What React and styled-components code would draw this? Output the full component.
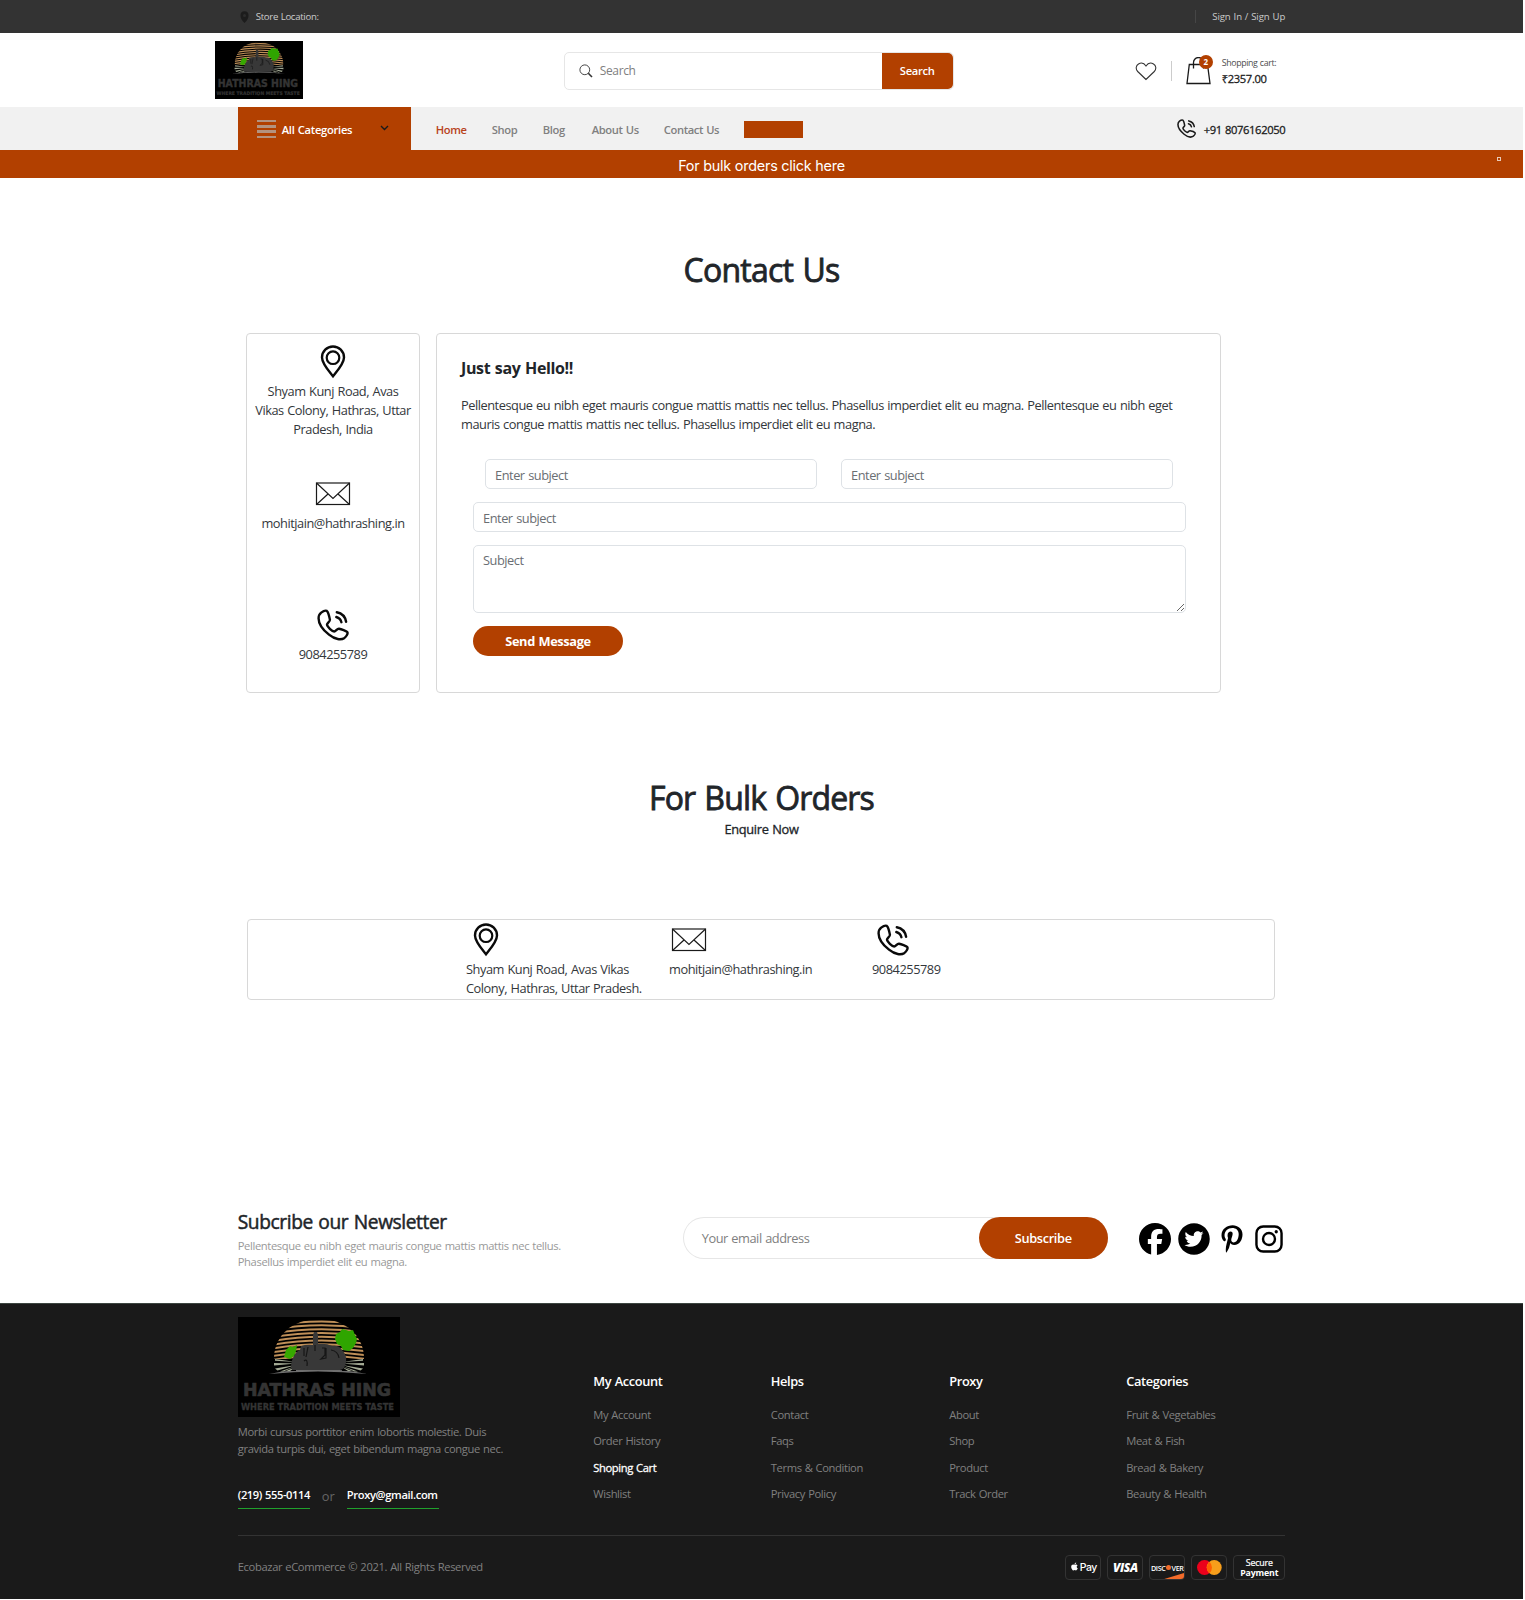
import React from "react";
import styled, { createGlobalStyle, css } from "styled-components";
import { AiFillTwitterCircle } from "react-icons/ai";
import { FaPinterestP, FaApple } from "react-icons/fa";
import { FaFacebook } from "react-icons/fa6";

const brand = "#b24000";

const GlobalStyle = createGlobalStyle`
  * { box-sizing: border-box; }
  body { margin: 0; background: #fff; color: #212529; font-family: "Open Sans", "Noto Sans", sans-serif; font-size: 12.8px; }
  p, h1, h2, h3, ul { margin: 0; padding: 0; }
  input, textarea, button { font-family: inherit; }
`;

const spacing = css`
  letter-spacing: ${(p) => p.$ls ?? -0.37}px;
  word-spacing: 0.05em;
`;

/* Open Sans ships no medium cut here, so a hairline stroke thickens the regular one. */
const medium = css`
  font-weight: 400;
  -webkit-text-stroke: 0.025em currentColor;
`;

const Page = styled.div`
  width: 1523px;
  height: 1599px;
  display: flex;
  flex-direction: column;
  overflow: hidden;
`;

const Container = styled.div`
  width: 1047.5px;
  margin: 0 auto;
  display: flex;
  align-items: center;
  height: 100%;
`;

/* ---------- top bar ---------- */
const TopBar = styled.div`
  height: 33px;
  background: #333;
  color: #ccc;
  font-size: 9.6px;
  line-height: 33px;
  flex: none;
`;
const StoreLocation = styled.span`
  display: flex;
  align-items: center;
  gap: 7px;
  padding-left: 2px;
  ${spacing}
`;
const AuthLinks = styled.a`
  display: flex;
  align-items: center;
  margin-left: auto;
  ${spacing}
  &::before {
    content: "";
    width: 1px;
    height: 13px;
    background: #464646;
    margin-right: 16px;
  }
`;

/* ---------- header ---------- */
const Header = styled.header`
  height: 74px;
  flex: none;
`;
const HeaderRow = styled(Container)`
  padding-top: 2px;
`;
const HeaderLogo = styled.div`
  margin: -2px 0 0 -23px;
  width: 88px;
  height: 58px;
  display: flex;
`;
const SearchBox = styled.div`
  display: flex;
  align-items: center;
  margin-left: 261px;
  margin-top: -1px;
  width: 390px;
  height: 38px;
  border: 1px solid #e6e6e6;
  border-radius: 5px;
  padding-left: 14px;
`;
const SearchHint = styled.span`
  flex: 1;
  margin-left: 7px;
  font-size: 12px;
  color: #808080;
  ${spacing}
`;
const SearchButton = styled.button`
  width: 71px;
  height: 36px;
  border: 0;
  padding: 0;
  background: ${brand};
  border-radius: 0 5px 5px 0;
  color: #fff;
  font-size: 11.2px;
  font-weight: 600;
  ${spacing}
`;
const HeaderTools = styled.div`
  display: flex;
  align-items: center;
  margin-left: 181px;
`;
const Separator = styled.span`
  width: 1px;
  height: 20px;
  background: #ccc;
  margin: 0 14px;
`;
const BagWrap = styled.div`
  position: relative;
  width: 25px;
  height: 28px;
  margin-right: 11px;
`;
const Badge = styled.span`
  position: absolute;
  top: -2px;
  right: -2px;
  width: 14px;
  height: 14px;
  border-radius: 50%;
  background: ${brand};
  color: #fff;
  font-size: 8px;
  font-weight: 700;
  line-height: 14px;
  text-align: center;
`;
const CartLabel = styled.div`
  font-size: 8.8px;
  line-height: 15px;
  color: #4d4d4d;
  ${spacing}
`;
const CartTotal = styled.div`
  font-size: 11.2px;
  line-height: 16px;
  color: #1a1a1a;
  ${medium}
  ${spacing}
`;

/* ---------- navigation ---------- */
const Nav = styled.nav`
  height: 43px;
  background: #f1f1f1;
  flex: none;
`;
const CategoryButton = styled.div`
  width: 173px;
  height: 43px;
  background: ${brand};
  color: #fff;
  font-size: 11.2px;
  font-weight: 600;
  display: flex;
  align-items: center;
  padding: 2px 22px 0 19px;
  ${spacing}
`;
const CategoryBars = styled.span`
  width: 19px;
  height: 18px;
  margin: -2px 6px 0 0;
  background: repeating-linear-gradient(#b4937f 0 2.4px, transparent 2.4px 5.2px);
`;
const Chevron = styled.svg`
  margin: -3px 0 0 auto;
`;
const NavLinks = styled.div`
  display: flex;
  gap: 25px;
  margin-left: 25px;
  padding-top: 2px;
  align-items: center;
`;
const NavLink = styled.a`
  width: ${(p) => p.$w}px;
  white-space: nowrap;
  font-size: 11.2px;
  font-weight: 600;
  color: ${(p) => (p.$active ? "#b8431c" : "#808080")};
  ${spacing}
`;
const NavBlock = styled.span`
  width: 59px;
  height: 17px;
  margin-top: -1px;
  background: ${brand};
`;
const NavPhone = styled.div`
  display: flex;
  align-items: center;
  gap: 8px;
  margin-left: auto;
  font-size: 11.2px;
  color: #1a1a1a;
  span { padding-top: 2px; }
  ${medium}
  ${spacing}
`;

const Banner = styled.div`
  position: relative;
  height: 28px;
  flex: none;
  background: ${brand};
  color: #fff;
  font-family: Inter, sans-serif;
  font-size: 14.4px;
  line-height: 31px;
  text-align: center;
  letter-spacing: -0.23px;
`;
const BannerClose = styled.span`
  position: absolute;
  right: 22px;
  top: 7px;
  width: 4px;
  height: 4px;
  border: 1px solid #e8c9b8;
`;

/* ---------- contact ---------- */
const PageTitle = styled.h1`
  font-size: 32px;
  line-height: 38px;
  text-align: center;
  margin-top: ${(p) => p.$top}px;
  ${medium}
  ${spacing}
`;
const SubTitle = styled.p`
  font-size: 12.8px;
  line-height: 19px;
  text-align: center;
  margin-top: 3px;
  ${medium}
  ${spacing}
`;
const ContactRow = styled.section`
  display: flex;
  gap: 16px;
  margin: 44px 0 0 246px;
`;
const Card = styled.div`
  border: 1px solid #d8d8d8;
  border-radius: 4px;
`;
const InfoCard = styled(Card)`
  width: 174px;
  height: 360px;
  padding-top: 8px;
`;
const InfoItem = styled.div`
  height: 131.7px;
  display: flex;
  flex-direction: column;
  align-items: center;
`;
const IconSlot = styled.div`
  height: 40px;
  padding: ${(p) => (p.$indent ? `0 0 0 ${p.$indent}px` : 0)};
  display: flex;
  align-items: center;
`;
const InfoLine = styled.div`
  font-size: 12.8px;
  line-height: 19.2px;
  color: #33373b;
  white-space: nowrap;
  letter-spacing: -0.46px;
  word-spacing: 0.05em;
`;
const FormCard = styled(Card)`
  width: 785px;
  height: 360px;
  padding: 22px 24px 0;
`;
const FormTitle = styled.h3`
  font-size: 16px;
  font-weight: 700;
  line-height: 24px;
  ${spacing}
`;
const FormText = styled.div`
  margin-top: 16px;
`;
const Form = styled.form`
  display: flex;
  flex-direction: column;
  gap: 13px;
  padding: 25px 0 0 12px;
`;
const FieldPair = styled.div`
  display: flex;
  gap: 24px;
  padding-left: 12px;
`;
const fieldCss = css`
  border: 1px solid #dee2e6;
  border-radius: 5px;
  background: #fff;
  font-size: 12.8px;
  padding: 2px 10px 0 9px;
  outline: 0;
  letter-spacing: -0.46px;
  word-spacing: 0.05em;
  &::placeholder { color: #6a6e73; opacity: 1; }
`;
const Field = styled.input`
  width: ${(p) => p.$w}px;
  height: 30px;
  ${fieldCss}
`;
const Message = styled.textarea`
  width: 713px;
  height: 68px;
  display: block;
  ${fieldCss}
  padding-top: 5px;
`;
const SendButton = styled.button`
  width: 150px;
  height: 30px;
  border: 0;
  border-radius: 15px;
  background: ${brand};
  color: #fff;
  font-size: 12.8px;
  font-weight: 700;
  padding: 0;
  ${spacing}
`;

const BulkCard = styled(Card)`
  display: flex;
  width: 1028px;
  height: 81px;
  margin: 80px 0 0 247px;
  padding-left: 218px;
`;
const BulkCell = styled.div`
  width: ${(p) => p.$w}px;
`;

/* ---------- newsletter ---------- */
const Newsletter = styled.section`
  width: 1047.5px;
  margin: 207px auto 0;
  height: 97px;
  display: flex;
`;
const NewsCopy = styled.div`
  width: 445px;
`;
const NewsTitle = styled.h2`
  font-size: 19.2px;
  line-height: 29px;
  margin-bottom: 2px;
  ${medium}
  ${spacing}
`;
const SmallText = styled.p`
  font-size: 11.2px;
  line-height: 16.8px;
  white-space: nowrap;
  color: ${(p) => p.$c};
  ${spacing}
`;
const EmailForm = styled.div`
  width: 425px;
  height: 42px;
  margin-top: 10.5px;
  display: flex;
  align-items: center;
  border-radius: 21px;
  background: #fff;
  box-shadow: inset 0 0 0 1px #e6e6e6;
  padding-left: 19px;
  color: #808080;
  font-size: 12.8px;
  letter-spacing: -0.46px;
  word-spacing: 0.05em;
`;
const SubscribeButton = styled.button`
  width: 129px;
  height: 42px;
  margin-left: auto;
  border: 0;
  border-radius: 21px;
  background: ${brand};
  color: #fff;
  font-size: 12.8px;
  font-weight: 600;
  ${spacing}
`;
const Socials = styled.div`
  display: flex;
  height: 32px;
  align-items: center;
  margin: 16px 0 0 31.5px;
  color: #000;
`;
const SocialIcon = styled.span`
  display: flex;
  margin-right: ${(p) => p.$gap}px;
`;

/* ---------- footer ---------- */
const Footer = styled.footer`
  height: 296px;
  background: #1a1a1a;
  flex: none;
  border-top: 1px solid #3c4540;
`;
const FooterBody = styled.div`
  width: 1047.5px;
  height: 232px;
  margin: 0 auto;
  display: flex;
  border-bottom: 1px solid #333;
`;
const About = styled.div`
  width: 355.5px;
  padding-top: 13px;
`;
const AboutLogo = styled.div`
  width: 162px;
  height: 100px;
  display: flex;
  margin-bottom: 7px;
`;
const ContactLinks = styled.div`
  display: flex;
  align-items: center;
  margin-top: 26px;
  color: #666;
  font-size: 12.8px;
`;
const ContactLink = styled.a`
  width: ${(p) => p.$w}px;
  height: 25px;
  white-space: nowrap;
  line-height: 22px;
  font-size: 11.2px;
  font-weight: 600;
  color: #fff;
  border-bottom: 1.5px solid #20a12c;
  ${spacing}
`;
const Or = styled.span`
  width: 37px;
  text-align: center;
`;
const LinkColumn = styled.div`
  width: ${(p) => p.$w}px;
  padding-top: 67px;
`;
const ColumnTitle = styled.h3`
  font-size: 12.8px;
  font-weight: 600;
  line-height: 20px;
  color: #fff;
  margin-bottom: 11px;
  white-space: nowrap;
  ${spacing}
`;
const FooterLink = styled.a`
  display: block;
  font-size: 11.2px;
  line-height: 26.3px;
  white-space: nowrap;
  color: ${(p) => (p.$active ? "#fff" : "#808080")};
  ${(p) => p.$active && medium}
  ${spacing}
`;
const FooterBottom = styled.div`
  width: 1047.5px;
  height: 63px;
  margin: 0 auto;
  display: flex;
  align-items: center;
  justify-content: space-between;
`;
const Payments = styled.div`
  display: flex;
  gap: 6px;
`;
const PayCard = styled.div`
  position: relative;
  overflow: hidden;
  width: ${(p) => p.$w ?? 36}px;
  height: 25px;
  border: 1px solid #333;
  border-radius: 4px;
  color: #fff;
  display: flex;
  align-items: center;
  justify-content: center;
`;
const ApplePay = styled.span`
  display: flex;
  align-items: center;
  gap: 1px;
  font: 500 10.5px Inter, sans-serif;
  letter-spacing: -0.5px;
  svg { margin-top: -2px; }
`;
const Visa = styled.span`
  font: italic 800 12px "Open Sans", sans-serif;
  letter-spacing: -0.4px;
`;
const Discover = styled.span`
  display: flex;
  align-items: center;
  font: 600 7.2px "Open Sans", sans-serif;
  letter-spacing: -0.35px;
  i { width: 5px; height: 5px; border-radius: 50%; background: #f26b2a; margin: 0 0.5px; }
`;
const DiscoverCorner = styled.span`
  position: absolute;
  right: 0;
  bottom: 0;
  width: 20px;
  height: 6px;
  background: #f26b2a;
  clip-path: polygon(100% 0, 100% 100%, 0 100%);
`;
const Secure = styled.div`
  font-size: 8.8px;
  line-height: 10px;
  text-align: center;
  ${medium}
  letter-spacing: -0.15px;
  b { display: block; font-weight: 700; -webkit-text-stroke: 0; }
`;

/* ---------- drawings ---------- */
const Logo = ({ w, h, id }) => (
  <svg width={w} height={h} viewBox="0 0 162 100" preserveAspectRatio="none">
    <defs>
      <clipPath id={id}><path d="M36 42V40C37 18 55 2 81 2s44 16 45 38v2z" /></clipPath>
    </defs>
    <rect width="162" height="100" fill="#000" />
    <g clipPath={`url(#${id})`} stroke="#bf8f58" strokeWidth="2" fill="none">
      {[-1, 2.8, 6.6, 10.4, 14.2, 18, 21.8, 25.6, 29.4, 33.2, 37].map((y) => (
        <path key={y} d={`M34 ${y + 6}Q80 ${y - 2} 128 ${y + 5}`} />
      ))}
    </g>
    <path d="M31 57Q80 47 129 57Q80 52 31 57z" fill="#6f6f6f" />
    <path d="M36 42h22v12H36zM104 42h22v12h-22z" fill="#000" />
    <g fill="#a4ab95">
      <path d="M58 45L37 42v1.800zM58 46.500L36 46v2.500zM58 48L37 51.500l2.500 2zM58 49L42 54.500h3.500zM58 50L48 54h4z" />
      <path d="M104 45l21-3v1.800zM104 46.500l22-.5v2.500zM104 48l21 3.500-2.500 2zM104 49l16 5.500h-3.500zM104 50l10 4h-4z" />
    </g>
    <path d="M54 53q-2-6 1-12 2-6 7-8l1-4q6-2 12-1V18l1-3h3l1 3v9q8-1 14 2 7-1 10 4 5 5 4 12-1 7-6 8z" fill="#383838" />
    <g stroke="#161616" strokeWidth="1.200" fill="none">
      <path d="M66 31v8M70 30l-2 10M84 31l3 0v7l-4 4 5-1V31M66 44q4-3 3 5M77 28v6M93 33q7 1 8 8" />
    </g>
    <path d="M46 40l2-7 4-4 3 1 4-2-1 6-2 5-4 3z" fill="#37a800" />
    <path d="M97 22l1-5 4-2 2-3 4 1 3 1 4-1 2 5 2 4-1 4-3 5-4 3-6-1-2-4-4-2z" fill="#2fa500" />
    <g fill="#343434" stroke="#343434" strokeWidth="0.700" fontFamily="'DejaVu Sans', sans-serif" fontWeight="700">
      <text x="5" y="78.500" fontSize="17" textLength="148" lengthAdjust="spacingAndGlyphs">HATHRAS HING</text>
      <text x="3" y="92.500" fontSize="8.400" strokeWidth="0.300" textLength="153" lengthAdjust="spacingAndGlyphs">WHERE TRADITION MEETS TASTE</text>
    </g>
  </svg>
);

const Pin = () => (
  <svg width="26" height="34" viewBox="0 0 26 34" fill="none" stroke="#0a0a0a">
    <path d="M13 31.300C8 25 2 18.500 2 12.500a11 11 0 0 1 22 0C24 18.500 18 25 13 31.300z" strokeWidth="2.400" />
    <circle cx="13" cy="12.700" r="6.300" strokeWidth="2.200" />
  </svg>
);

const Mail = () => (
  <svg width="36" height="24" viewBox="0 0 36 24" fill="none" stroke="#1a1a1a" strokeWidth="1.200">
    <rect x="1.500" y="1" width="33" height="21.500" />
    <path d="M1.500 1L18 16.500 34.500 1M1.500 22.500L13 12M34.500 22.500L23 12" />
  </svg>
);

const Phone = ({ size = 32, sw = 2.4, color = "#0a0a0a" }) => (
  <svg width={size} height={size} viewBox="0 0 32 32" fill="none" stroke={color} strokeWidth={sw} strokeLinecap="round" strokeLinejoin="round">
    <path d="M4.200 3.600C6.300 2 8.600 1.200 9.800 1.900c1.500 1 2.700 6.600 3.100 8.700.4 2-2.900 3.200-2.900 5 0 2 5.200 6.900 7.200 6.900 1.700 0 2.800-3 4.800-2.700 2.200.3 7.300 2 8.300 3.300 1 1.400-1 4.500-2.800 5.800-3.200 2.200-9.500 1.800-15.500-3.200C5.500 20.500 1.500 14.500 1.600 9.200c0-2.300 1.200-4.500 2.600-5.600z" />
    <path d="M19.800 3.200c5 1 8.500 4.500 9.300 9.600M19.300 8c2.700.8 4.500 2.600 5.100 5.200" />
  </svg>
);

const address = ["Shyam Kunj Road, Avas", "Vikas Colony, Hathras, Uttar", "Pradesh, India"];
const columns = [
  { title: "My Account", w: 177.5, links: ["My Account", "Order History", "Shoping Cart", "Wishlist"], active: 2 },
  { title: "Helps", w: 178.5, links: ["Contact", "Faqs", "Terms & Condition", "Privacy Policy"] },
  { title: "Proxy", w: 177, links: ["About", "Shop", "Product", "Track Order"] },
  { title: "Categories", w: 150, links: ["Fruit & Vegetables", "Meat & Fish", "Bread & Bakery", "Beauty & Health"] },
];
const navItems = [["Home", 31], ["Shop", 26], ["Blog", 24], ["About Us", 47], ["Contact Us", 55]];

export default function App() {
  return (
    <Page>
      <GlobalStyle />
      <TopBar>
        <Container>
          <StoreLocation $ls={-0.3}>
            <svg width="9" height="12" viewBox="0 0 9 12"><path d="M4.500 12C2 9.500 .5 7.500 .5 4.500a4 4.200 0 0 1 8 0C8.500 7.500 7 9.500 4.500 12z" fill="#1c1c1c" /><circle cx="4.500" cy="4.500" r="1.500" fill="#2c2c2c" /></svg>
            Store Location:
          </StoreLocation>
          <AuthLinks $ls={-0.08}>Sign In / Sign Up</AuthLinks>
        </Container>
      </TopBar>

      <Header>
        <HeaderRow>
          <HeaderLogo><Logo id="sun-header" w={88} h={58} /></HeaderLogo>
          <SearchBox>
            <svg width="14" height="14" viewBox="0 0 14 14" fill="none" stroke="#333"><circle cx="5.800" cy="5.800" r="4.900" strokeWidth="0.900" /><path d="M9.300 9.300l3.700 3.700" strokeWidth="1.600" /></svg>
            <SearchHint>Search</SearchHint>
            <SearchButton $ls={-0.3}>Search</SearchButton>
          </SearchBox>
          <HeaderTools>
            <svg width="22" height="19" viewBox="0 0 22 19" fill="none" stroke="#333" strokeWidth="1.100"><path d="M11 17.500L2.700 9.500C.3 7 1 3.300 3.500 1.900 6.300.4 9.300 1.400 11 4c1.700-2.600 4.700-3.600 7.500-2.100 2.500 1.400 3.200 5.100.8 7.600z" /></svg>
            <Separator />
            <BagWrap>
              <svg width="25" height="28" viewBox="0 0 25 28" fill="none" stroke="#1a1a1a" strokeWidth="1.300"><path d="M3.300 7.500h18.200L24 26.500H1z" /><path d="M7.500 11.500V5.500a5 5 0 0 1 10 0v6" /></svg>
              <Badge>2</Badge>
            </BagWrap>
            <div>
              <CartLabel>Shopping cart:</CartLabel>
              <CartTotal>₹2357.00</CartTotal>
            </div>
          </HeaderTools>
        </HeaderRow>
      </Header>

      <Nav>
        <Container>
          <CategoryButton $ls={-0.28}>
            <CategoryBars />
            All Categories
            <Chevron width="9" height="6" viewBox="0 0 9 6" fill="none" stroke="#1a1a1a" strokeWidth="1.400"><path d="M1 1l3.500 3.500L8 1" /></Chevron>
          </CategoryButton>
          <NavLinks>
            {navItems.map(([label, w], i) => <NavLink key={label} $w={w} $active={i === 0}>{label}</NavLink>)}
            <NavBlock />
          </NavLinks>
          <NavPhone><Phone size={19} sw={2.6} color="#1a1a1a" /><span>+91 8076162050</span></NavPhone>
        </Container>
      </Nav>

      <Banner>For bulk orders click here<BannerClose /></Banner>

      <PageTitle $top={73} $ls={-0.75}>Contact Us</PageTitle>

      <ContactRow>
        <InfoCard>
          <InfoItem>
            <IconSlot><Pin /></IconSlot>
            {address.map((line) => <InfoLine key={line}>{line}</InfoLine>)}
          </InfoItem>
          <InfoItem>
            <IconSlot><Mail /></IconSlot>
            <InfoLine>mohitjain@hathrashing.in</InfoLine>
          </InfoItem>
          <InfoItem>
            <IconSlot><Phone /></IconSlot>
            <InfoLine>9084255789</InfoLine>
          </InfoItem>
        </InfoCard>
        <FormCard>
          <FormTitle>Just say Hello!!</FormTitle>
          <FormText>
            <InfoLine>Pellentesque eu nibh eget mauris congue mattis mattis nec tellus. Phasellus imperdiet elit eu magna. Pellentesque eu nibh eget</InfoLine>
            <InfoLine>mauris congue mattis mattis nec tellus. Phasellus imperdiet elit eu magna.</InfoLine>
          </FormText>
          <Form>
            <FieldPair>
              <Field $w={332} placeholder="Enter subject" />
              <Field $w={332} placeholder="Enter subject" />
            </FieldPair>
            <Field $w={713} placeholder="Enter subject" />
            <Message placeholder="Subject" />
            <SendButton type="button">Send Message</SendButton>
          </Form>
        </FormCard>
      </ContactRow>

      <PageTitle as="h2" $top={86} $ls={-0.85}>For Bulk Orders</PageTitle>
      <SubTitle $ls={-0.3}>Enquire Now</SubTitle>

      <BulkCard>
        <BulkCell $w={203}>
          <IconSlot $indent={7}><Pin /></IconSlot>
          <InfoLine>Shyam Kunj Road, Avas Vikas</InfoLine>
          <InfoLine>Colony, Hathras, Uttar Pradesh.</InfoLine>
        </BulkCell>
        <BulkCell $w={203}>
          <IconSlot $indent={2}><Mail /></IconSlot>
          <InfoLine>mohitjain@hathrashing.in</InfoLine>
        </BulkCell>
        <BulkCell $w={203}>
          <IconSlot $indent={5}><Phone /></IconSlot>
          <InfoLine>9084255789</InfoLine>
        </BulkCell>
      </BulkCard>

      <Newsletter>
        <NewsCopy>
          <NewsTitle $ls={-0.42}>Subcribe our Newsletter</NewsTitle>
          <SmallText $c="#999">Pellentesque eu nibh eget mauris congue mattis mattis nec tellus.</SmallText>
          <SmallText $c="#999">Phasellus imperdiet elit eu magna.</SmallText>
        </NewsCopy>
        <EmailForm>
          Your email address
          <SubscribeButton>Subscribe</SubscribeButton>
        </EmailForm>
        <Socials>
          <SocialIcon $gap={5}><FaFacebook size={32} /></SocialIcon>
          <SocialIcon $gap={6}><AiFillTwitterCircle size={36} /></SocialIcon>
          <SocialIcon $gap={9}><FaPinterestP size={28} /></SocialIcon>
          <SocialIcon $gap={0}>
            <svg width="28" height="28" viewBox="0 0 29 29" fill="none" stroke="#000" strokeWidth="2.500"><rect x="1.500" y="1.500" width="26" height="26" rx="7" /><circle cx="14.500" cy="14.500" r="6.200" /><circle cx="22" cy="7" r="1.700" fill="#000" stroke="none" /></svg>
          </SocialIcon>
        </Socials>
      </Newsletter>

      <Footer>
        <FooterBody>
          <About>
            <AboutLogo><Logo id="sun-footer" w={162} h={100} /></AboutLogo>
            <SmallText $c="#808080">Morbi cursus porttitor enim lobortis molestie. Duis</SmallText>
            <SmallText $c="#808080">gravida turpis dui, eget bibendum magna congue nec.</SmallText>
            <ContactLinks>
              <ContactLink $w={72} $ls={-0.42}>(219) 555-0114</ContactLink>
              <Or>or</Or>
              <ContactLink $w={92}>Proxy@gmail.com</ContactLink>
            </ContactLinks>
          </About>
          {columns.map((c) => (
            <LinkColumn key={c.title} $w={c.w}>
              <ColumnTitle>{c.title}</ColumnTitle>
              {c.links.map((l, i) => <FooterLink key={l} $active={i === c.active}>{l}</FooterLink>)}
            </LinkColumn>
          ))}
        </FooterBody>
        <FooterBottom>
          <SmallText $c="#808080">Ecobazar eCommerce © 2021. All Rights Reserved</SmallText>
          <Payments>
            <PayCard><ApplePay><FaApple size={9} />Pay</ApplePay></PayCard>
            <PayCard><Visa>VISA</Visa></PayCard>
            <PayCard><Discover>DISC<i />VER</Discover><DiscoverCorner /></PayCard>
            <PayCard>
              <svg width="25" height="15" viewBox="0 0 25 15"><circle cx="7.500" cy="7.500" r="7.500" fill="#eb001b" /><circle cx="17.200" cy="7.500" r="7.500" fill="#f79e1b" /><path d="M12.350 1.800a7.500 7.500 0 0 1 0 11.400a7.500 7.500 0 0 1 0-11.400z" fill="#ff5f00" /></svg>
            </PayCard>
            <PayCard $w={52}><Secure>Secure<b>Payment</b></Secure></PayCard>
          </Payments>
        </FooterBottom>
      </Footer>
    </Page>
  );
}
